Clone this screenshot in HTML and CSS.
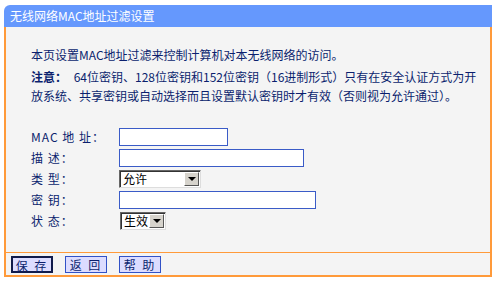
FILE: index.html
```html
<!DOCTYPE html>
<html lang="zh-CN">
<head>
  <meta charset="UTF-8" />
  <title>无线网络MAC地址过滤设置</title>
  <link rel="stylesheet" href="styles.css">
</head>
<body>
  <div class="panel">
    <div class="title">无线网络MAC地址过滤设置</div>

    <div class="content">
      <p class="intro">本页设置MAC地址过滤来控制计算机对本无线网络的访问。</p>
      <p class="note"><b>注意：</b> 64位密钥、128位密钥和152位密钥（16进制形式）只有在安全认证方式为开<br>放系统、共享密钥或自动选择而且设置默认密钥时才有效（否则视为允许通过）。</p>

      <form class="form">
        <div class="row">
          <label>MAC 地 址：</label>
          <input type="text" class="w-mac">
        </div>
        <div class="row">
          <label>描 述：</label>
          <input type="text" class="w-desc">
        </div>
        <div class="row">
          <label>类 型：</label>
          <div class="sel w-type">
            <span class="sel-text">允许</span>
            <span class="sel-btn"></span>
          </div>
        </div>
        <div class="row">
          <label>密 钥：</label>
          <input type="text" class="w-key">
        </div>
        <div class="row">
          <label>状 态：</label>
          <div class="sel w-state">
            <span class="sel-text">生效</span>
            <span class="sel-btn"></span>
          </div>
        </div>
      </form>
    </div>

    <div class="footer">
      <button class="btn active">保 存</button>
      <button class="btn">返 回</button>
      <button class="btn">帮 助</button>
    </div>
  </div>
</body>
</html>
```

FILE: styles.css
```css
/* Base */
* {
  box-sizing: border-box;
  margin: 0;
  padding: 0;
}
body {
  background: #fff;
  font-family: "Noto Sans CJK SC", "DejaVu Sans", sans-serif;
  font-size: 12px;
  color: #0b1f6e;
}

/* Panel frame */
.panel {
  width: 488px;
  margin: 5px 0 0 4px;
}
.title {
  height: 22px;
  line-height: 22px;
  padding-left: 6px;
  background: #6598fd;
  color: #fff;
  border-radius: 6px 0 0 0;
}
.content {
  height: 225px;
  padding: 18px 0 0 25px;
  background: #f4f4f4;
  border-left: 2px solid #ff9a3a;
  border-right: 2px solid #ff9a3a;
}
.intro {
  line-height: 20px;
}
.note {
  margin-top: 2px;
  line-height: 19px;
  white-space: nowrap;
}
.note b {
  font-weight: 700;
  margin-right: 4px;
}

/* Form rows */
.form {
  margin-top: 21px;
}
.row {
  display: flex;
  align-items: center;
  height: 21px;
}
.row label {
  width: 88px;
  letter-spacing: 1px;
}
input[type="text"] {
  height: 18px;
  border: 1px solid #3a5bc7;
  background: #fff;
  outline: none;
}
.w-mac { width: 109px; }
.w-desc { width: 185px; }
.w-key { width: 197px; }

/* Select boxes */
.sel {
  position: relative;
  height: 18px;
  background: #fff;
  border: 1px solid;
  border-color: #666 #ddd #ddd #666;
  box-shadow: inset 1px 1px 0 #333;
}
.w-type { width: 82px; }
.w-state { width: 46px; margin-left: 1px; }
.sel-text {
  display: block;
  padding-left: 3px;
  line-height: 16px;
  color: #000;
}
.sel-btn {
  position: absolute;
  top: 1px;
  right: 1px;
  width: 15px;
  height: 14px;
  background: #d6d3cc;
  border: 1px solid;
  border-color: #fff #555 #555 #fff;
}
.sel-btn::after {
  content: "";
  position: absolute;
  left: 3px;
  top: 4px;
  border-left: 4px solid transparent;
  border-right: 4px solid transparent;
  border-top: 4px solid #000;
}

/* Footer buttons */
.footer {
  height: 25px;
  display: flex;
  align-items: center;
  gap: 12px;
  padding-left: 5px;
  background: #f4f4f4;
  border: 2px solid #ff9a3a;
  border-top-width: 1px;
}
.btn {
  width: 42px;
  height: 17px;
  font-family: inherit;
  font-size: 12px;
  line-height: 15px;
  letter-spacing: 2px;
  color: #0b1f6e;
  background: #dcdcff;
  border: 1px solid #3151c6;
  cursor: pointer;
}
.btn.active {
  border: 2px solid #101a4a;
}
```
